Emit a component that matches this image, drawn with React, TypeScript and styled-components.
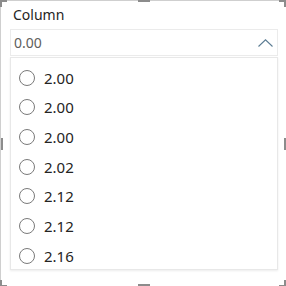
import React from "react";
import styled, { createGlobalStyle } from "styled-components";

const GlobalStyle = createGlobalStyle`
    html, body {
        margin: 0;
        padding: 0;
        background: #ffffff;
        overflow: hidden;
    }
    * {
        box-sizing: border-box;
    }
`

const values = ["2.00", "2.00", "2.00", "2.02", "2.12", "2.12", "2.16"];

export default function App() {
    return (
        <>
            <GlobalStyle />
            <Frame>
                <Corner $v="top" $h="left" />
                <Corner $v="top" $h="right" />
                <Corner $v="bottom" $h="left" />
                <Corner $v="bottom" $h="right" />
                <Handle $side="top" />
                <Handle $side="bottom" />
                <Handle $side="left" />
                <Handle $side="right" />

                <Title>Column</Title>
                <Header>
                    <Selected>0.00</Selected>
                    <svg width="15" height="8" viewBox="0 0 15 8">
                        <polyline points="0.5,7.5 7.5,0.8 14.5,7.5" fill="none" stroke="#5b7c93" strokeWidth="1.1" />
                    </svg>
                </Header>
                <List>
                    {values.map((v, i) => (
                        <Item key={i}>
                            <Radio />
                            <Label>{v}</Label>
                        </Item>
                    ))}
                </List>
            </Frame>
        </>
    )
}

const Frame = styled.div`
    position: relative;
    width: 286px;
    height: 286px;
    border-top: 1px solid #cfcfcf;
    border-left: 1px solid #cfcfcf;
    padding: 4px 8px 0 9px;
    font-family: "Segoe UI", "Noto Sans", "Open Sans", sans-serif;
`
const Corner = styled.span<{ $v: "top" | "bottom"; $h: "left" | "right" }>`
    position: absolute;
    width: 7px;
    height: 7px;
    ${p => p.$v}: -1px;
    ${p => p.$h}: ${p => (p.$h === "left" ? "-1px" : "0")};
    border-${p => p.$v}: 2px solid #8c8c8c;
    border-${p => p.$h}: 2px solid #8c8c8c;
`
const Handle = styled.span<{ $side: "top" | "bottom" | "left" | "right" }>`
    position: absolute;
    background: #8c8c8c;
    ${p => (p.$side === "top" || p.$side === "bottom")
        ? `width: 12px; height: 2px; left: 137px; ${p.$side}: ${p.$side === "top" ? "-1px" : "0"};`
        : `width: 2px; height: 12px; top: 137px; ${p.$side}: 0;`}
`
const Title = styled.div`
    font-size: 14px;
    line-height: 20px;
    color: #252423;
    padding-left: 3px;
    margin-bottom: 4px;
`
const Header = styled.div`
    height: 27px;
    border: 1px solid #ebebeb;
    display: flex;
    align-items: center;
    justify-content: space-between;
    padding: 0 4px 0 3px;
`
const Selected = styled.span`
    font-size: 14px;
    color: #605e5c;
`
const List = styled.div`
    margin-top: 1px;
    height: 213px;
    border: 1px solid #e8e8e8;
    box-shadow: 0 1px 2px rgba(0, 0, 0, 0.08);
    overflow: hidden;
    padding-top: 5px;
`
const Item = styled.div`
    height: 29.67px;
    display: flex;
    align-items: center;
    padding-left: 8px;
`
const Radio = styled.span`
    width: 16px;
    height: 16px;
    border: 1px solid #7a7a7a;
    border-radius: 50%;
    flex-shrink: 0;
`
const Label = styled.span`
    margin-left: 9px;
    font-size: 15px;
    color: #252423;
`
